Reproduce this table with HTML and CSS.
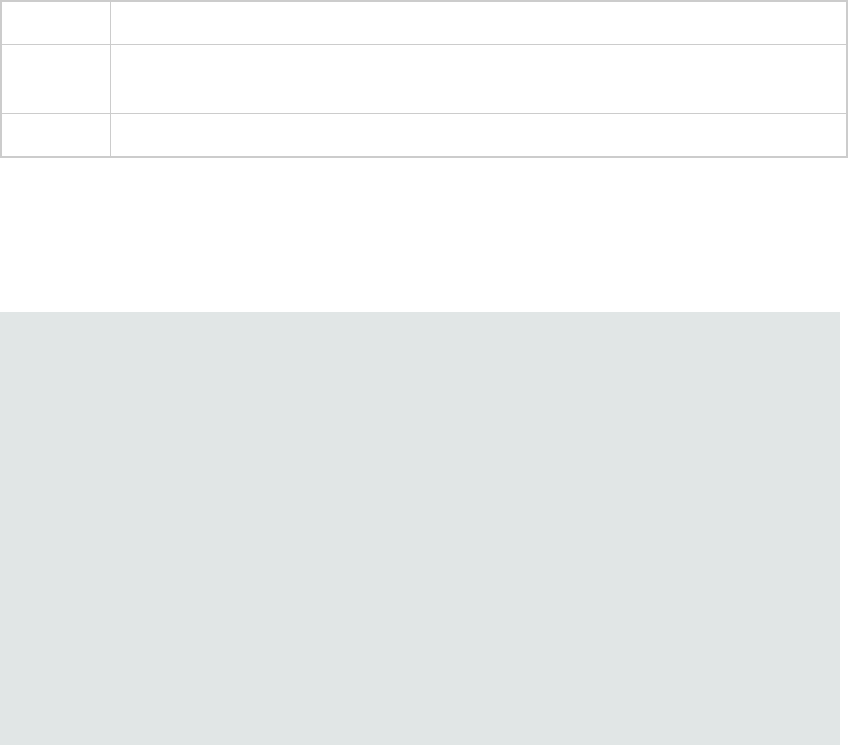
FILE: index.html
```html
<!DOCTYPE html>
<html lang="en">
<head>
    <meta charset="UTF-8">
    <meta name="viewport" content="width=device-width, initial-scale=1.0">
    <title>Details</title>
    <link rel="stylesheet" href="styles.css">
</head>
<body>
    <table class="info-table">
        <tr class="row-short">
            <td class="label-cell"></td>
            <td></td>
        </tr>
        <tr class="row-tall">
            <td class="label-cell"></td>
            <td></td>
        </tr>
        <tr class="row-short">
            <td class="label-cell"></td>
            <td></td>
        </tr>
    </table>

    <div class="panel"></div>
</body>
</html>
```

FILE: styles.css
```css
body { margin: 0; font-family: Arial, "Liberation Sans", sans-serif; background: #ffffff; }
.info-table { width: 848px; border-collapse: collapse; border: 2px solid #cccccc; background: #ffffff; }
.info-table td { border: 1px solid #cccccc; padding: 0; }
.label-cell { width: 108px; }
.row-short td { height: 42px; }
.row-tall td { height: 68px; }
.panel { margin-top: 154px; width: 840px; height: 440px; background-color: #e1e6e6; }
```
